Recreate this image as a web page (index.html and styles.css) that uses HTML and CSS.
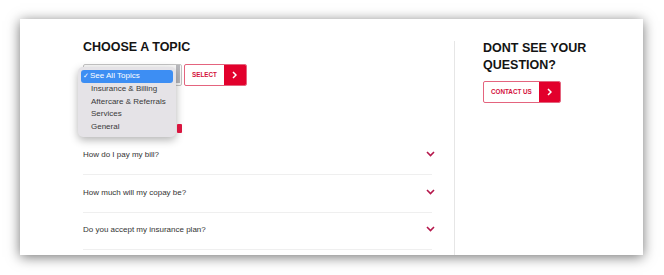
FILE: index.html
```html
<!DOCTYPE html>
<html>
<head>
<meta charset="utf-8">
<link rel="stylesheet" href="styles.css">
</head>
<body>
<div class="page">
<div class="card">
  <div class="main">
    <h2 class="heading">CHOOSE A TOPIC</h2>
    <div class="select-row">
      <div class="select-wrap">
        <div class="select-box"><span class="select-arrow"></span></div>
        <ul class="popup">
          <li class="opt active"><span class="check">✓</span>See All Topics</li>
          <li class="opt">Insurance &amp; Billing</li>
          <li class="opt">Aftercare &amp; Referrals</li>
          <li class="opt">Services</li>
          <li class="opt">General</li>
        </ul>
      </div>
      <a class="btn"><span class="btn-label">SELECT</span><span class="btn-icon"><svg width="5" height="8" viewBox="0 0 5 8"><path d="M1 1 L4 4 L1 7" fill="none" stroke="#fff" stroke-width="1.5"/></svg></span></a>
    </div>
    <div class="chip-row"><span class="chip"></span></div>
    <ul class="faq">
      <li class="faq-row"><span>How do I pay my bill?</span><svg class="chev" width="9" height="6" viewBox="0 0 9 6"><path d="M1 1 L4.5 4.5 L8 1" fill="none" stroke="#b5174b" stroke-width="1.6"/></svg></li>
      <li class="faq-row"><span>How much will my copay be?</span><svg class="chev" width="9" height="6" viewBox="0 0 9 6"><path d="M1 1 L4.5 4.5 L8 1" fill="none" stroke="#b5174b" stroke-width="1.6"/></svg></li>
      <li class="faq-row"><span>Do you accept my insurance plan?</span><svg class="chev" width="9" height="6" viewBox="0 0 9 6"><path d="M1 1 L4.5 4.5 L8 1" fill="none" stroke="#b5174b" stroke-width="1.6"/></svg></li>
    </ul>
  </div>
  <div class="side">
    <h2 class="heading">DONT SEE YOUR<br>QUESTION?</h2>
    <a class="btn contact"><span class="btn-label">CONTACT US</span><span class="btn-icon"><svg width="5" height="8" viewBox="0 0 5 8"><path d="M1 1 L4 4 L1 7" fill="none" stroke="#fff" stroke-width="1.5"/></svg></span></a>
  </div>
</div>
</div>
</body>
</html>
```
FILE: styles.css
```css
html, body {
  margin: 0;
  padding: 0;
  background: #ffffff;
  font-family: "Liberation Sans", Arial, sans-serif;
}

.page {
  height: 275px;
  padding-top: 19px;
  box-sizing: border-box;
}

.card {
  margin-left: 20px;
  width: 623px;
  height: 236px;
  background: #ffffff;
  box-shadow: 0 2px 12px rgba(0, 0, 0, 0.55);
  display: flex;
  align-items: stretch;
}

.main {
  width: 349px;
  padding: 20px 22px 0 63px;
}

.side {
  margin-top: 22px;
  padding-left: 28px;
  border-left: 1px solid #e6e6e6;
  flex: 1;
}

.heading {
  margin: 0;
  font-size: 12.5px;
  line-height: 17px;
  font-weight: bold;
  color: #141414;
}

.side .heading {
  margin-top: -1px;
}

.select-row {
  margin-top: 8px;
  display: flex;
  align-items: flex-start;
  gap: 2px;
}

.select-wrap {
  position: relative;
}

.select-box {
  width: 97px;
  height: 20px;
  border: 1px solid #c4c4c4;
  border-radius: 2px;
  background: #fafafa;
  display: flex;
  justify-content: flex-end;
}

.select-arrow {
  width: 4px;
  margin: 0 1px 2px 0;
  background: #b9b9bd;
}

.popup {
  position: absolute;
  left: -5px;
  top: 3px;
  width: 92px;
  margin: 0;
  padding: 3px 3px;
  list-style: none;
  background: #e5e3e7;
  border-radius: 5px;
  box-shadow: 0 3px 8px rgba(0, 0, 0, 0.3);
  z-index: 4;
}

.opt {
  height: 12.75px;
  line-height: 12.75px;
  font-size: 8px;
  color: #3a3a3a;
  padding-left: 10px;
  border-radius: 3px;
  white-space: nowrap;
}

.opt.active {
  background: #3d8ef3;
  color: #ffffff;
  padding-left: 2px;
}

.check {
  display: inline-block;
  width: 7px;
  font-size: 7px;
}

.btn {
  display: flex;
  height: 22px;
  box-sizing: border-box;
  border: 1px solid #e4647e;
  border-radius: 2px;
  background: #ffffff;
  overflow: hidden;
}

.btn-label {
  padding: 0 7px;
  font-size: 6.3px;
  font-weight: bold;
  line-height: 20px;
  color: #d3103b;
  white-space: nowrap;
}

.btn-icon {
  width: 22px;
  flex: none;
  background: #e2002c;
  display: flex;
  align-items: center;
  justify-content: center;
}

.contact {
  margin-top: 7px;
  width: 78px;
}

.chip-row {
  margin-top: 38px;
  height: 9px;
  margin-bottom: 4.5px;
  display: flex;
}

.chip {
  margin-left: 94px;
  width: 5px;
  height: 9px;
  background: #d9153f;
  border-radius: 1px;
  position: relative;
  z-index: 5;
}

.faq {
  margin: 0;
  padding: 0;
  list-style: none;
}

.faq-row {
  height: 36.5px;
  border-bottom: 1px solid #efefef;
  display: flex;
  align-items: center;
  justify-content: space-between;
  font-size: 8px;
  color: #333333;
}

.faq-row span {
  margin-top: -2px;
}

.chev {
  margin-right: -3px;
  margin-top: -3px;
}
```
